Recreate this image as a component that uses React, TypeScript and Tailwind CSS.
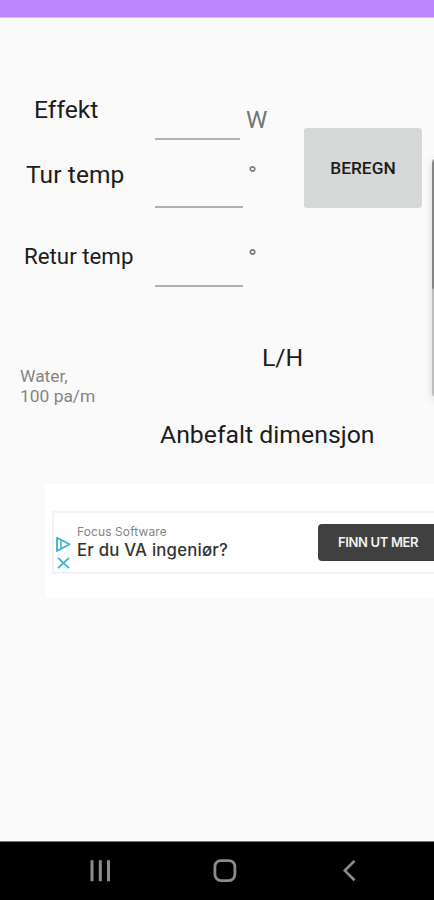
type FieldProps = {
  label: string;
  unit: string;
  rowClass: string;
  labelClass: string;
  inputClass: string;
  unitClass: string;
};

const FIELDS: FieldProps[] = [
  {
    label: "Effekt",
    unit: "W",
    rowClass: "h-[122px]",
    labelClass: "pl-[34px] pt-[80px] text-[24.7px]",
    inputClass: "w-[85px]",
    unitClass: "pl-[6px] pt-[90px]",
  },
  {
    label: "Tur temp",
    unit: "°",
    rowClass: "h-[68px]",
    labelClass: "pl-[26px] pt-[23px] text-[24.5px] tracking-[0.1px]",
    inputClass: "w-[88px]",
    unitClass: "pl-[5px] pt-[23px]",
  },
  {
    label: "Retur temp",
    unit: "°",
    rowClass: "h-[79px]",
    labelClass: "pl-[24px] pt-[37px] text-[22.3px]",
    inputClass: "w-[88px]",
    unitClass: "pl-[5px] pt-[38px]",
  },
];

function Field({ label, unit, rowClass, labelClass, inputClass, unitClass }: FieldProps) {
  return (
    <div className={`flex ${rowClass}`}>
      <label className={`w-[155px] shrink-0 whitespace-nowrap leading-none text-[#1c1c1c] ${labelClass}`}>
        {label}
      </label>
      <input
        aria-label={label}
        className={`h-full shrink-0 border-b-2 border-[#b0b0b0] bg-transparent outline-none ${inputClass}`}
      />
      <span className={`text-[24px] leading-none text-[#757575] ${unitClass}`}>{unit}</span>
    </div>
  );
}

function AdBanner() {
  return (
    <div className="ml-[45px] mt-[37px] h-[114px] bg-white pl-[7px] pt-[27px]">
      <div className="flex h-[63px] border-y-2 border-l-2 border-[#f3f3f3]">
        <div className="flex w-[23px] shrink-0 flex-col pl-[2px] pt-[23px]">
          <svg className="h-[17px] w-[15px]" viewBox="0 0 15 17" fill="none" stroke="#35b5c8" strokeWidth="1.8">
            <path d="M1 1.8 L13.6 8.3 L1 15 Z" strokeLinejoin="round" />
            <path d="M5 4.5v7.5" strokeWidth="1.5" />
          </svg>
          <svg className="mt-[4px] h-[12px] w-[15px]" viewBox="0 0 15 12" fill="none" stroke="#35b5c8" strokeWidth="1.8">
            <path d="M2 0.8l11 10.4M13 0.8L2 11.2" />
          </svg>
        </div>
        <div className="w-[241px] shrink-0 whitespace-nowrap pt-[11px] font-['Inter','Liberation_Sans',sans-serif]">
          <p className="text-[12px] leading-[15px] tracking-[0.1px] text-[#858585]">Focus Software</p>
          <p className="mt-[1px] text-[16.8px] font-medium leading-[20px] tracking-[0.2px] text-[#333]">
            Er du VA ingeniør?
          </p>
        </div>
        <button className="mt-[11px] h-[37px] flex-1 whitespace-nowrap rounded-l-[4px] bg-[#404040] pl-[20px] text-left font-['Inter','Liberation_Sans',sans-serif] text-[13px] font-semibold leading-none tracking-[-0.35px] text-[#f2f2f2]">
          FINN UT MER
        </button>
      </div>
    </div>
  );
}

function NavBar() {
  return (
    <nav className="flex h-[59px] items-start border-t border-[#777] bg-black pl-[89px] pt-[17px]">
      <svg className="h-6 w-6" viewBox="0 0 24 24" stroke="#8c8c8c" strokeWidth="3">
        <path d="M3 1.2v21M11.3 1.2v21M19.5 1.2v21" />
      </svg>
      <svg className="ml-[100px] h-6 w-6" viewBox="0 0 24 24" fill="none" stroke="#8c8c8c" strokeWidth="2.8">
        <rect x="1.9" y="1.6" width="20" height="20" rx="6" />
      </svg>
      <svg className="ml-[101px] h-6 w-6" viewBox="0 0 24 24" fill="none" stroke="#8c8c8c" strokeWidth="2.7">
        <path d="M16.5 1.9L6.8 11.6l9.7 9.7" />
      </svg>
    </nav>
  );
}

export default function App() {
  return (
    <div className="relative flex h-[900px] w-[434px] flex-col overflow-hidden bg-[#fafafa] font-['Roboto','Liberation_Sans',sans-serif]">
      <header className="h-[18px] shrink-0 border-b border-[#dac0fc] bg-[#bb86fc]" />

      <main className="flex-1">
        <section className="flex">
          <div className="w-[304px] shrink-0">
            {FIELDS.map((field) => (
              <Field key={field.label} {...field} />
            ))}
          </div>
          <button className="mt-[110px] h-[80px] w-[118px] rounded-[3px] bg-[#d6d8d7] pt-[2px] text-[17.3px] font-medium leading-none text-[#1c1c1c]">
            BEREGN
          </button>
        </section>

        <section className="text-[#1c1c1c]">
          <p className="ml-[262px] mt-[59px] text-[24.8px] leading-[24px]">L/H</p>
          <p className="ml-[20px] mt-[-4px] text-[17.4px] leading-[20px] text-[#858585]">
            Water,
            <br />
            100 pa/m
          </p>
          <p className="ml-[160px] mt-[17px] whitespace-nowrap text-[24.8px] leading-[24px]">Anbefalt dimensjon</p>
        </section>

        <AdBanner />
      </main>

      <NavBar />

      {/* edge panel handle */}
      <div className="absolute right-[-8px] top-[158px] h-[240px] w-[10px] rounded-[8px] bg-linear-to-b from-[#858585] from-54% to-[#bdbdbd] to-55% shadow-[0_2px_8px_rgba(0,0,0,0.15)]" />
    </div>
  );
}
